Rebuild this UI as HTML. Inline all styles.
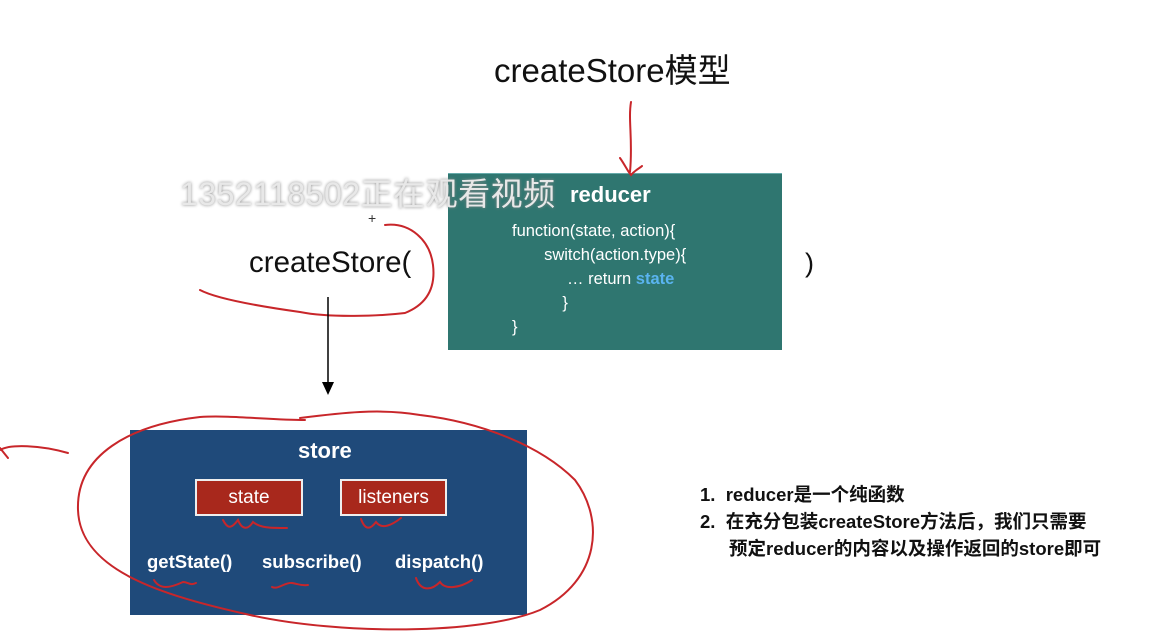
<!DOCTYPE html>
<html><head><meta charset="utf-8"><style>
html,body{margin:0;padding:0;background:#fff;}
body{width:1154px;height:640px;position:relative;overflow:hidden;font-family:"Liberation Sans","Noto Sans CJK SC",sans-serif;}
.a{position:absolute;white-space:nowrap;}
</style></head><body>
<div class="a" style="left:494px;top:44px;font-size:33px;color:#111;">createStore模型</div>

<div class="a" style="left:448px;top:173px;width:334px;height:176px;background:#2f7670;border-top:1px solid #6aa;"></div>
<div class="a" style="left:570px;top:182px;font-size:22px;font-weight:bold;color:#fff;">reducer</div>
<div class="a" style="left:512px;top:219px;font-size:16.5px;color:#fff;line-height:24px;">function(state, action){<br>&nbsp;&nbsp;&nbsp;&nbsp;&nbsp;&nbsp;&nbsp;switch(action.type){<br>&nbsp;&nbsp;&nbsp;&nbsp;&nbsp;&nbsp;&nbsp;&nbsp;&nbsp;&nbsp;&nbsp;&nbsp;… return <b style="color:#5ab4f0">state</b><br>&nbsp;&nbsp;&nbsp;&nbsp;&nbsp;&nbsp;&nbsp;&nbsp;&nbsp;&nbsp;&nbsp;}<br>}</div>

<div class="a" style="left:249px;top:246px;font-size:29.5px;color:#111;">createStore(</div>
<div class="a" style="left:805px;top:248px;font-size:27px;color:#111;">)</div>
<div class="a" style="left:368px;top:210px;font-size:14px;color:#333;">+</div>

<div class="a" style="left:180px;top:169px;font-size:32px;color:#e8e8e8;text-shadow:0 0 3px #888;letter-spacing:0.5px;">1352118502正在观看视频</div>

<div class="a" style="left:130px;top:430px;width:397px;height:185px;background:#1f4a7a;"></div>
<div class="a" style="left:298px;top:438px;font-size:22px;font-weight:bold;color:#fff;">store</div>
<div class="a" style="left:195px;top:479px;width:104px;height:33px;background:#a8281c;border:2px solid #eee;color:#fff;font-size:19px;text-align:center;line-height:33px;">state</div>
<div class="a" style="left:340px;top:479px;width:103px;height:33px;background:#a8281c;border:2px solid #eee;color:#fff;font-size:19px;text-align:center;line-height:33px;">listeners</div>
<div class="a" style="left:147px;top:551px;font-size:18.5px;font-weight:bold;color:#fff;">getState()</div>
<div class="a" style="left:262px;top:551px;font-size:18.5px;font-weight:bold;color:#fff;">subscribe()</div>
<div class="a" style="left:395px;top:551px;font-size:18.5px;font-weight:bold;color:#fff;">dispatch()</div>

<div class="a" style="left:700px;top:481px;font-size:18.5px;font-weight:bold;color:#111;line-height:27px;">1.&nbsp; reducer是一个纯函数<br>2.&nbsp; 在充分包装createStore方法后，我们只需要<br><span style="padding-left:29px">预定reducer的内容以及操作返回的store即可</span></div>

<svg class="a" style="left:0;top:0" width="1154" height="640" viewBox="0 0 1154 640">
<g fill="none" stroke="#c8262a" stroke-width="2" stroke-linecap="round">
<path d="M631 102 C628 120 633 140 630 172 M620 158 C625 165 628 172 631 175 C635 170 640 168 642 166"/>
<path d="M385 225 C410 222 430 240 433 265 C436 290 425 305 405 313 C380 316 330 318 300 312 C250 305 215 298 200 290"/>
<path d="M200 417 C230 415 270 420 305 420 M300 418 C340 413 380 408 420 415 C480 422 540 445 575 480 C605 520 600 580 540 610 C480 635 340 635 250 615 C160 595 80 570 78 510 C76 455 130 425 200 417"/>
<path d="M0 450 C10 444 40 445 68 453 M0 448 L8 458"/>
<path d="M223 520 C228 530 232 528 238 520 C242 530 248 530 253 522 C260 528 270 528 287 528"/>
<path d="M361 519 C365 530 370 530 376 522 C382 530 392 525 401 518"/>
<path d="M154 580 C160 590 170 588 183 582 C188 582 190 586 196 583"/>
<path d="M272 587 C278 590 285 582 292 583 C298 584 302 586 308 585"/>
<path d="M416 578 C420 590 430 592 440 582 C445 590 460 588 472 580"/>
</g>
<g stroke="#000" stroke-width="1.5"><line x1="328" y1="297" x2="328" y2="385"/></g>
<polygon points="322,382 334,382 328,395" fill="#000"/>
</svg>
</body></html>
